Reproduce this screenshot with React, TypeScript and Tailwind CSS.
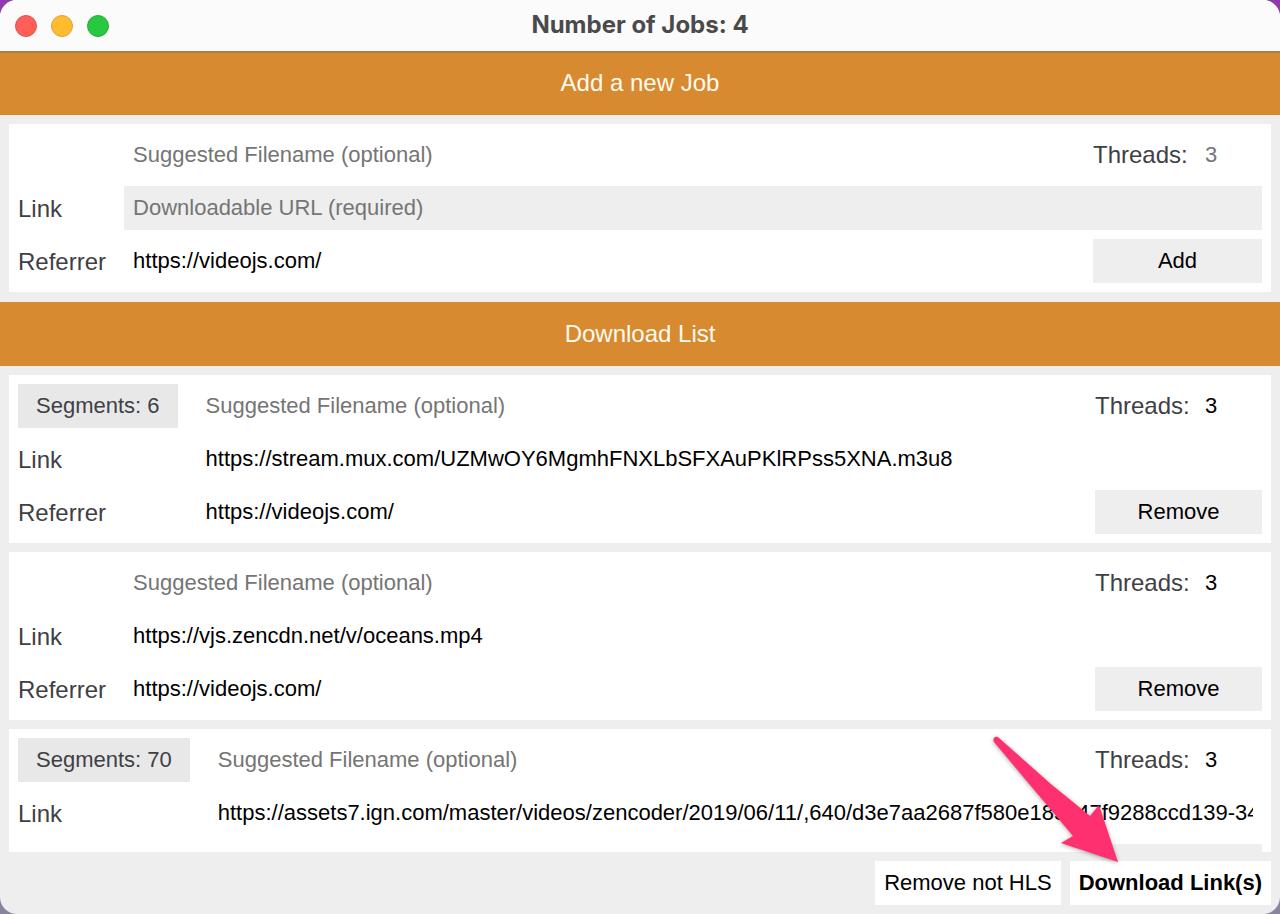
import React, { useState } from "react";
import clsx from "clsx";

type Job = {
  id: string;
  segments?: number;
  filename: string;
  link: string;
  referrer: string;
  threads: string;
};

const initialJobs: Job[] = [
  {
    id: '0',
    segments: 6,
    filename: '',
    link: 'https://stream.mux.com/UZMwOY6MgmhFNXLbSFXAuPKlRPss5XNA.m3u8',
    referrer: 'https://videojs.com/',
    threads: '3',
  },
  {
    id: '1',
    filename: '',
    link: 'https://vjs.zencdn.net/v/oceans.mp4',
    referrer: 'https://videojs.com/',
    threads: '3',
  },
  {
    id: '2',
    segments: 70,
    filename: '',
    link: 'https://assets7.ign.com/master/videos/zencoder/2019/06/11/,640/d3e7aa2687f580e185c47f9288ccd139-34',
    referrer: 'https://videojs.com/',
    threads: '3',
  },
];

const field = "h-[44px] w-full min-w-0 px-[9px] text-[22px] text-black outline-none placeholder:text-[#757575]";
const label = "mr-[9px] pt-[2px] text-[24px] leading-[42px] text-[#3f4045]";
const button = "h-[44px] pb-[2px] text-[22px] text-black";

function TitleBar({count}: {count: number}) {
  return (
    <header className="relative flex h-[51px] shrink-0 items-center gap-[14px] bg-[#fcfbfc] pl-[15px]">
      <button aria-label="Close" className="size-[22px] rounded-full border border-[#e0524d] bg-[#ff5f58]" />
      <button aria-label="Minimize" className="size-[22px] rounded-full border border-[#dda23a] bg-[#febc2e]" />
      <button aria-label="Zoom" className="size-[22px] rounded-full border border-[#25ad38] bg-[#28c840]" />
      <h1 className="pointer-events-none absolute inset-x-0 pb-[2px] text-center font-['Inter'] text-[24px] font-bold text-[#4a4a4a]">
        Number of Jobs: {count}
      </h1>
    </header>
  );
}

function Section({children, first}: {children: React.ReactNode; first?: boolean}) {
  return (
    <h2 className={clsx(
      "h-[64px] shrink-0 bg-[#d78a2f] text-center text-[24px] leading-[64px] text-[#fffaf0]",
      first && "shadow-[inset_0_2px_0_#a98045]",
    )}>
      {children}
    </h2>
  );
}

function Threads({id, value, placeholder, onChange}: {
  id: string;
  value: string;
  placeholder?: string;
  onChange: (value: string) => void;
}) {
  return (
    <div className="flex items-center justify-between">
      <label htmlFor={id} className="text-[24px] leading-[44px] text-[#3f4045]">Threads:</label>
      <input
        id={id}
        className="h-[44px] w-[66px] px-[9px] text-[22px] text-black outline-none placeholder:text-[#757575]"
        placeholder={placeholder}
        value={value}
        onChange={e => onChange(e.target.value)}
      />
    </div>
  );
}

function NewJob() {
  const [job, setJob] = useState({filename: '', link: '', referrer: 'https://videojs.com/', threads: ''});

  return (
    <form
      className="mx-[9px] mt-[9px] mb-[10px] grid shrink-0 grid-cols-[auto_1fr_169px] gap-[9px] bg-white p-[9px]"
      onSubmit={e => e.preventDefault()}
    >
      <input
        className={clsx(field, "col-start-2")}
        aria-label="Suggested Filename"
        placeholder="Suggested Filename (optional)"
        value={job.filename}
        onChange={e => setJob({...job, filename: e.target.value})}
      />
      <Threads id="new-threads" placeholder="3" value={job.threads} onChange={threads => setJob({...job, threads})} />
      <label htmlFor="new-link" className={label}>Link</label>
      <input
        id="new-link"
        className={clsx(field, "col-span-2 bg-[#eeeeee]")}
        placeholder="Downloadable URL (required)"
        value={job.link}
        onChange={e => setJob({...job, link: e.target.value})}
      />
      <label htmlFor="new-referrer" className={label}>Referrer</label>
      <input
        id="new-referrer"
        className={field}
        value={job.referrer}
        onChange={e => setJob({...job, referrer: e.target.value})}
      />
      <button className={clsx(button, "bg-[#eeeeee]")}>Add</button>
    </form>
  );
}

function JobCard({job, onUpdate, onRemove}: {
  job: Job;
  onUpdate: (job: Job) => void;
  onRemove: () => void;
}) {
  return (
    <li className="grid grid-cols-[auto_1fr_167px] gap-[9px] bg-white p-[9px]">
      {job.segments !== undefined && (
        <div className="mr-[10px] bg-[#e8e8e8] px-[18px] text-[22px] leading-[44px] text-[#3f4045]">
          Segments: {job.segments}
        </div>
      )}
      <input
        className={clsx(field, "col-start-2")}
        aria-label="Suggested Filename"
        placeholder="Suggested Filename (optional)"
        value={job.filename}
        onChange={e => onUpdate({...job, filename: e.target.value})}
      />
      <Threads id={'threads-' + job.id} value={job.threads} onChange={threads => onUpdate({...job, threads})} />
      <label htmlFor={'link-' + job.id} className={label}>Link</label>
      <input
        id={'link-' + job.id}
        className={clsx(field, "col-span-2")}
        value={job.link}
        onChange={e => onUpdate({...job, link: e.target.value})}
      />
      <label htmlFor={'referrer-' + job.id} className={label}>Referrer</label>
      <input
        id={'referrer-' + job.id}
        className={field}
        value={job.referrer}
        onChange={e => onUpdate({...job, referrer: e.target.value})}
      />
      <button className={clsx(button, "bg-[#eeeeee]")} onClick={onRemove}>Remove</button>
    </li>
  );
}

// Points at the download button, floats above the list
function Arrow() {
  return (
    <svg
      className="pointer-events-none absolute right-[156px] bottom-[46px] h-[134px] w-[134px] overflow-visible drop-shadow-[0_1px_2px_rgba(0,0,0,0.35)]"
      viewBox="0 0 134 134"
      aria-hidden="true"
    >
      <path
        d="M4 8 C2 4 6 1 9 4 L62 51 Q82 67 100 82 L109 71 L128 128 L71 109 L83 102 Q62 77 40 51 Z"
        fill="#ff3070"
      />
    </svg>
  );
}

export default function App() {
  const [jobs, setJobs] = useState(initialJobs);

  return (
    <div className="h-screen bg-linear-to-b from-[#8e3aad] to-[#8785a0]">
      <div className="relative flex h-full flex-col overflow-hidden rounded-[17px] bg-[#eeeeee] font-['Liberation_Sans',Arial,sans-serif]">
        <TitleBar count={jobs.length + 1} />
        <Section first>Add a new Job</Section>
        <NewJob />
        <Section>Download List</Section>
        <ul className="flex min-h-0 flex-1 flex-col gap-[9px] overflow-y-auto px-[9px] pt-[9px] [scrollbar-width:none]">
          {jobs.map(job => (
            <JobCard
              key={job.id}
              job={job}
              onUpdate={next => setJobs(jobs.map(item => item.id === next.id ? next : item))}
              onRemove={() => setJobs(jobs.filter(item => item.id !== job.id))}
            />
          ))}
        </ul>
        <footer className="flex shrink-0 justify-end gap-[9px] p-[9px]">
          <button
            className={clsx(button, "bg-white px-[9px]")}
            onClick={() => setJobs(jobs.filter(job => job.segments !== undefined))}
          >
            Remove not HLS
          </button>
          <button className={clsx(button, "bg-white px-[9px] font-bold")}>Download Link(s)</button>
        </footer>
        <Arrow />
      </div>
    </div>
  );
}
